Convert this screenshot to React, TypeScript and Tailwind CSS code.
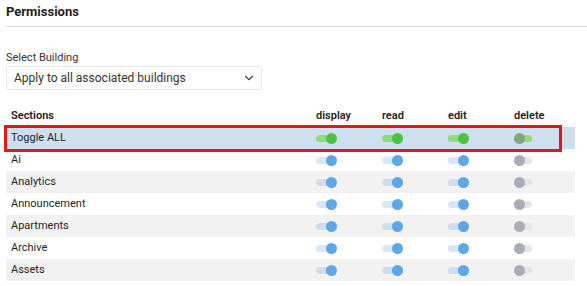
import { ChevronDown } from 'lucide-react'

type Mode = 'on' | 'off' | 'allOn' | 'allMixed'

function Toggle({ mode }: { mode: Mode }): JSX.Element {
  const track =
    mode === 'on' ? 'bg-[#5ea6e6]/25' :
    mode === 'off' ? 'bg-[#e4e5e9]' :
    'bg-[#8fdc7e]'
  const knob =
    mode === 'on' ? 'bg-[#5ea6e6] left-[10px]' :
    mode === 'off' ? 'bg-[#a9adb8] left-0' :
    mode === 'allOn' ? 'bg-[#4cc241] left-[10px]' :
    'bg-[#83a57f] left-0'

  return (
    <div className="relative w-[21px] h-[11px]">
      <div className={`absolute left-0 top-[2px] w-[18px] h-[7px] rounded-full ${track}`} />
      <div className={`absolute top-0 w-[11px] h-[11px] rounded-full ${knob}`} />
    </div>
  )
}

// last row is only partly on screen, its label falls below the fold
const sections = ['Ai', 'Analytics', 'Announcement', 'Apartments', 'Archive', 'Assets', '']

function Row({ name, index, all }: { name: string; index: number; all?: boolean }): JSX.Element {
  const bg = all ? 'bg-[#cedfed]' : index % 2 === 1 ? 'bg-[#f2f2f2]' : 'bg-white'
  return (
    <div className={`relative flex items-center h-[22px] ${bg}`}>
      <div className="w-[305px] pl-[5px] text-[11px] text-[#1f1f1f]">{name}</div>
      <div className="w-[66px] pl-[5px]"><Toggle mode={all ? 'allOn' : 'on'} /></div>
      <div className="w-[66px] pl-[5px]"><Toggle mode={all ? 'allOn' : 'on'} /></div>
      <div className="w-[66px] pl-[5px]"><Toggle mode={all ? 'allOn' : 'on'} /></div>
      <div className="w-[66px] pl-[5px]"><Toggle mode={all ? 'allMixed' : 'off'} /></div>
      {all && (
        // highlight box drawn over the row
        <div className="absolute z-10 left-[-2px] top-[-2px] w-[558px] h-[27px] border-[3px] border-[#e8141c]" />
      )}
    </div>
  )
}

export default function App(): JSX.Element {
  return (
    <div className="w-[587px] h-[286px] overflow-hidden bg-white text-[#222] font-['Roboto',sans-serif]">
      <div className="pl-[6px] pt-[2px] h-[26px] text-[13px] font-bold leading-[20px] text-[#1e1e1e]">
        Permissions
      </div>
      <div className="ml-[6px] h-px bg-[#dcdcdc]" />

      <div className="px-[6px] pt-[24px]">
        <div className="text-[11px] leading-[14px] text-[#333] mb-[1px]">Select Building</div>
        <div className="flex items-center justify-between w-[256px] h-[24px] pl-[7px] pr-[5px] border border-[#e6e6e6] rounded-[3px]">
          <span className="text-[12px] text-[#333]">Apply to all associated buildings</span>
          <ChevronDown size={14} strokeWidth={2} className="text-[#444]" />
        </div>
      </div>

      <div className="ml-[6px] w-[569px] mt-[15px]">
        <div className="flex items-center h-[22px] text-[11px] font-semibold text-[#222]">
          <div className="w-[305px] pl-[5px]">Sections</div>
          <div className="w-[66px] pl-[5px]">display</div>
          <div className="w-[66px] pl-[5px]">read</div>
          <div className="w-[66px] pl-[5px]">edit</div>
          <div className="w-[66px] pl-[5px]">delete</div>
        </div>
        <Row name="Toggle ALL" index={0} all />
        {sections.map((s, i) => (
          <Row key={i} name={s} index={i} />
        ))}
      </div>
    </div>
  )
}
